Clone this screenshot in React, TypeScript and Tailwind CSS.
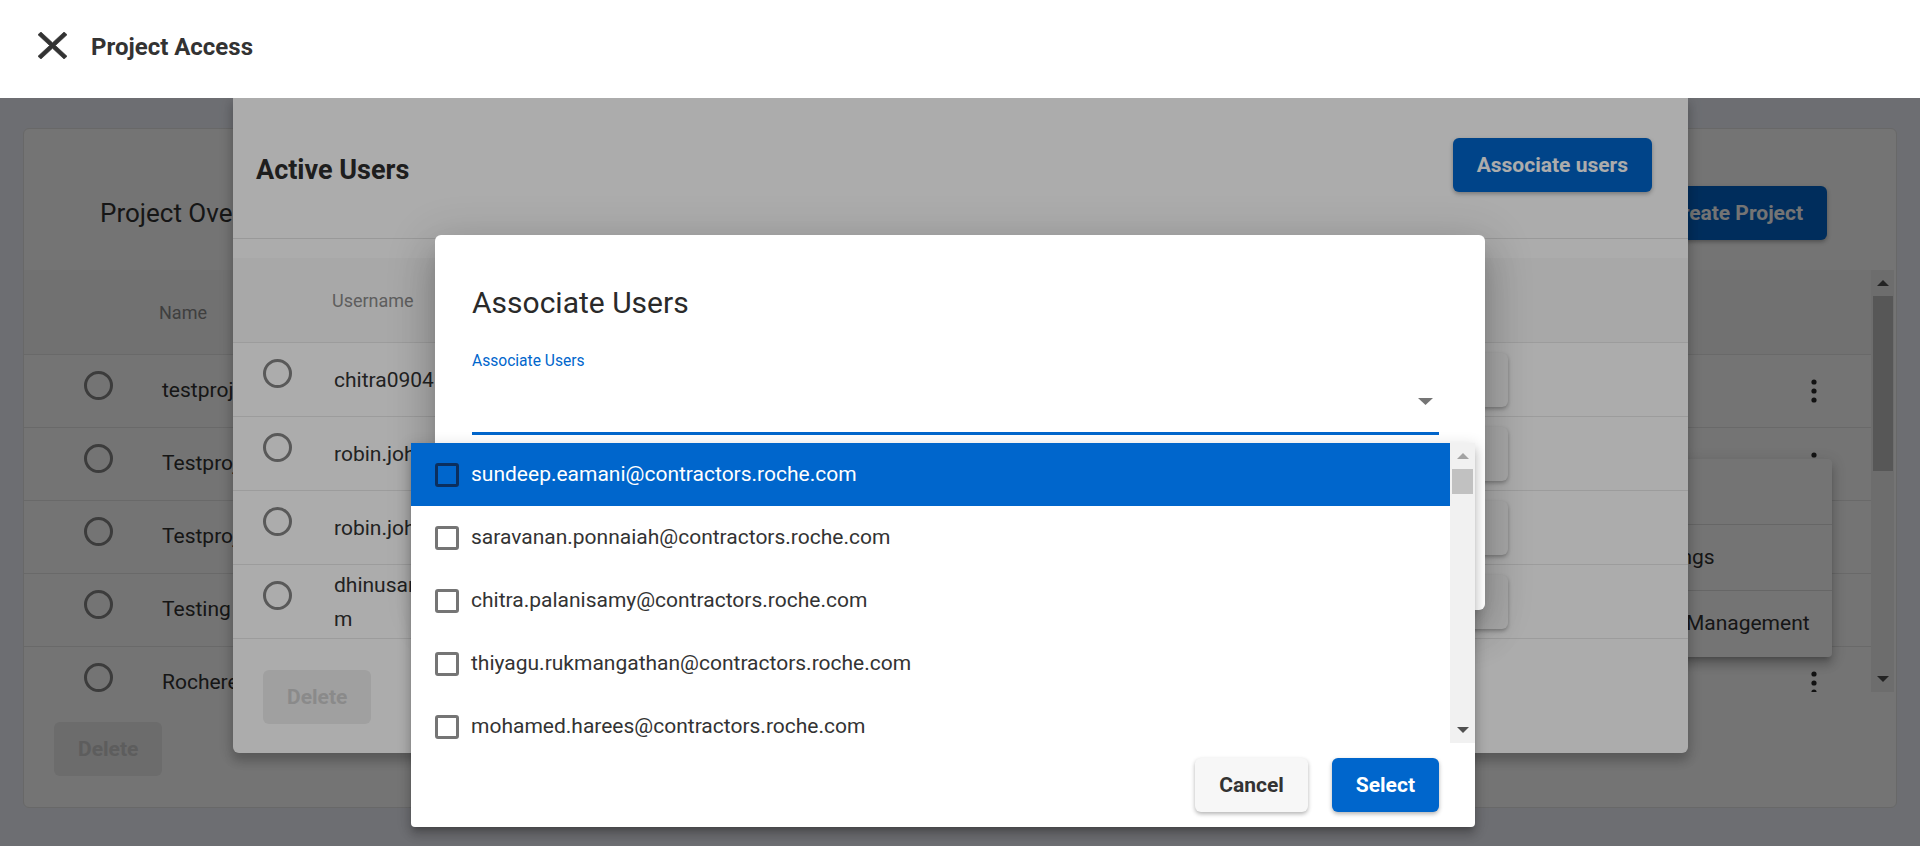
import type { ReactNode } from 'react'

const projects = ['testproject01', 'Testproject2', 'Testproject3', 'Testing project', 'Rocheresearch']

const activeUsers: ReactNode[] = [
  'chitra09041990@roche.com',
  'robin.john@roche.com',
  'robin.johnson@roche.com',
  <>
    dhinusankar.ganesan@roche.co
    <br />m
  </>,
]

const candidates = [
  'sundeep.eamani@contractors.roche.com',
  'saravanan.ponnaiah@contractors.roche.com',
  'chitra.palanisamy@contractors.roche.com',
  'thiyagu.rukmangathan@contractors.roche.com',
  'mohamed.harees@contractors.roche.com',
]

type ButtonVariant = 'primary' | 'light' | 'disabled'

const buttonStyles: Record<ButtonVariant, string> = {
  primary: 'bg-[#0066cc] text-white shadow-[0_2px_4px_rgba(0,0,0,0.3)]',
  light: 'bg-[#f7f7f7] text-[#333333] shadow-[0_2px_4px_rgba(0,0,0,0.3)]',
  disabled: 'bg-[#eeeeee] text-[#cdcdcd]',
}

function ActionButton({ children, variant, className = '' }: { children: ReactNode; variant: ButtonVariant; className?: string }) {
  return (
    <button
      type="button"
      className={`h-[54px] shrink-0 rounded-[6px] px-[24px] text-[21px] font-bold leading-none ${buttonStyles[variant]} ${className}`}
    >
      {children}
    </button>
  )
}

function CloseIcon() {
  return (
    <svg width="29" height="27" viewBox="5 5 14 14" preserveAspectRatio="none" aria-hidden="true" className="mb-[8px] shrink-0">
      <path
        fill="#333333"
        stroke="#333333"
        strokeWidth="0.35"
        d="M19 6.41 17.59 5 12 10.59 6.41 5 5 6.41 10.59 12 5 17.59 6.41 19 12 13.41 17.59 19 19 17.59 13.41 12z"
      />
    </svg>
  )
}

function Radio() {
  return <span className="mb-[12px] block h-[29px] w-[29px] shrink-0 rounded-full border-[3px] border-[#848484]" />
}

function Kebab() {
  return (
    <svg width="24" height="24" viewBox="0 0 24 24" aria-hidden="true" className="mr-[45px] shrink-0">
      <circle cx="12" cy="3" r="2.6" fill="#2a2a2a" />
      <circle cx="12" cy="12" r="2.6" fill="#2a2a2a" />
      <circle cx="12" cy="21" r="2.6" fill="#2a2a2a" />
    </svg>
  )
}

function Arrow({ up, color }: { up?: boolean; color: string }) {
  return (
    <svg width="12" height="6" viewBox="0 0 12 6" aria-hidden="true">
      <polygon points={up ? '0,6 6,0 12,6' : '0,0 12,0 6,6'} fill={color} />
    </svg>
  )
}

function ScrollTrack({ wide }: { wide?: boolean }) {
  return (
    <div className={`flex h-full shrink-0 flex-col items-center bg-[#f1f1f1] ${wide ? 'w-[25px]' : 'w-[23px]'}`}>
      <div className="flex h-[26px] items-center justify-center">
        <Arrow up color={wide ? '#a3a3a3' : '#505050'} />
      </div>
      <div className={`bg-[#c1c1c1] ${wide ? 'h-[25px] w-[21px]' : 'h-[175px] w-[20px]'}`} />
      <div className="flex-1" />
      <div className="flex h-[27px] items-center justify-center">
        <Arrow color="#505050" />
      </div>
    </div>
  )
}

function ProjectOverviewCard() {
  return (
    <section className="relative flex h-[680px] flex-col rounded-[6px] border border-[#e4e4e4] bg-white">
      <div className="mt-[57px] flex h-[54px] items-center justify-between pl-[76px] pr-[69px]">
        <h2 className="text-[26px] font-normal text-[#333333]">Project Overview</h2>
        <ActionButton variant="primary">Create Project</ActionButton>
      </div>

      <div className="mt-[30px] flex h-[422px] pr-[2px]">
        <div className="flex-1 overflow-hidden">
          <div className="flex h-[85px] items-center border-b border-[#e8e8e8] bg-[#fafafa] pl-[135px] text-[18px] text-[#8c8c8c]">
            Name
          </div>
          {projects.map((name) => (
            <div key={name} className="flex h-[73px] items-center border-b border-[#e8e8e8]">
              <div className="ml-[60px]">
                <Radio />
              </div>
              <span className="ml-[49px] flex-1 text-[21px] text-[#333333]">{name}</span>
              <Kebab />
            </div>
          ))}
        </div>
        <ScrollTrack />
      </div>

      <div className="ml-[30px] mt-[30px]">
        <ActionButton variant="disabled">Delete</ActionButton>
      </div>

      <div className="absolute right-[64px] top-[330px] w-[210px] rounded-[4px] bg-white shadow-[0_5px_5px_-3px_rgba(0,0,0,0.2),0_8px_10px_1px_rgba(0,0,0,0.14),0_3px_14px_2px_rgba(0,0,0,0.12)]">
        {['Edit', 'Settings', 'User Management'].map((item, index) => (
          <div
            key={item}
            className={`flex h-[66px] items-center pl-[16px] text-[21px] text-[#333333] ${index < 2 ? 'border-b border-[#e0e0e0]' : ''}`}
          >
            {item}
          </div>
        ))}
      </div>
    </section>
  )
}

function ActiveUsersPanel() {
  return (
    <section className="absolute left-[233px] top-0 flex h-[655px] w-[1455px] flex-col rounded-b-[6px] bg-white shadow-[0_8px_10px_1px_rgba(0,0,0,0.14),0_3px_14px_2px_rgba(0,0,0,0.12)]">
      <div className="flex h-[141px] shrink-0 items-start justify-between border-b border-[#e3e3e3] pl-[23px] pr-[36px]">
        <h2 className="mt-[55px] text-[27px] font-bold leading-[34px] text-[#2d2d2d]">Active Users</h2>
        <ActionButton variant="primary" className="mt-[40px]">
          Associate users
        </ActionButton>
      </div>

      <div className="h-[19px] shrink-0" />

      <div className="flex h-[85px] shrink-0 items-center border-b border-[#e8e8e8] bg-[#fafafa] pl-[99px] text-[18px] text-[#8c8c8c]">
        Username
      </div>
      {activeUsers.map((name, index) => (
        <div key={index} className="flex h-[74px] shrink-0 items-center border-b border-[#e8e8e8]">
          <div className="ml-[30px]">
            <Radio />
          </div>
          <span className="ml-[42px] flex-1 text-[21px] leading-[34px] text-[#333333]">{name}</span>
          <button
            type="button"
            className="mr-[180px] h-[54px] w-[120px] rounded-[6px] bg-[#fafafa] text-[18px] text-[#333333] shadow-[0_2px_4px_rgba(0,0,0,0.3)]"
          >
            Remove
          </button>
        </div>
      ))}

      <div className="ml-[30px] mt-[31px]">
        <ActionButton variant="disabled">Delete</ActionButton>
      </div>
    </section>
  )
}

function AssociateUsersDialog() {
  return (
    <section className="absolute left-[435px] top-[137px] h-[375px] w-[1050px] rounded-[6px] bg-white pl-[37px] pr-[46px] pt-[51px] shadow-[0_11px_15px_-7px_rgba(0,0,0,0.2),0_24px_38px_3px_rgba(0,0,0,0.14),0_9px_46px_8px_rgba(0,0,0,0.12)]">
      <h2 className="text-[30px] font-normal leading-[34px] text-[#2a2a2a]">Associate Users</h2>
      <label className="mt-[32px] block text-[15.6px] leading-[18px] text-[#0066cc]">Associate Users</label>
      <div className="flex h-[65px] items-center justify-end border-b-[3px] border-[#0066cc] pr-[6px]">
        <svg width="15" height="7" viewBox="0 0 15 7" aria-hidden="true">
          <polygon points="0,0 15,0 7.5,7" fill="#757575" />
        </svg>
      </div>
    </section>
  )
}

function UserOptions() {
  return (
    <section className="absolute left-[411px] top-[345px] w-[1064px] rounded-b-[4px] bg-white shadow-[0_5px_5px_-3px_rgba(0,0,0,0.2),0_8px_10px_1px_rgba(0,0,0,0.14),0_3px_14px_2px_rgba(0,0,0,0.12)]">
      <div className="flex h-[300px]">
        <ul className="flex-1 overflow-hidden">
          {candidates.map((email, index) => {
            const active = index === 0
            return (
              <li
                key={email}
                className={`flex h-[63px] items-center pl-[24px] text-[21px] ${active ? 'bg-[#0066cc] text-white' : 'text-[#333333]'}`}
              >
                <span
                  className={`h-[24px] w-[24px] shrink-0 rounded-[3px] border-[3px] ${active ? 'border-[#0b2f5e]' : 'border-[#757575]'}`}
                />
                <span className="ml-[12px]">{email}</span>
              </li>
            )
          })}
        </ul>
        <ScrollTrack wide />
      </div>
      <div className="flex justify-end gap-[24px] pb-[15px] pr-[36px] pt-[15px]">
        <ActionButton variant="light">Cancel</ActionButton>
        <ActionButton variant="primary">Select</ActionButton>
      </div>
    </section>
  )
}

export default function App() {
  return (
    <div className="h-[846px] w-full overflow-hidden bg-[#f1f4fc] font-['Roboto','Liberation_Sans',sans-serif]">
      <header className="relative z-30 flex h-[98px] items-center bg-white pl-[38px]">
        <CloseIcon />
        <h1 className="mb-[4px] ml-[24px] text-[24px] font-bold text-[#333333]">Project Access</h1>
      </header>

      <main className="relative h-[748px] px-[23px] pt-[30px]">
        <ProjectOverviewCard />
        <div className="absolute inset-0 bg-[rgba(0,0,0,0.325)]" />
        <ActiveUsersPanel />
        <div className="absolute inset-0 bg-[rgba(0,0,0,0.325)]" />
        <AssociateUsersDialog />
        <UserOptions />
      </main>
    </div>
  )
}
